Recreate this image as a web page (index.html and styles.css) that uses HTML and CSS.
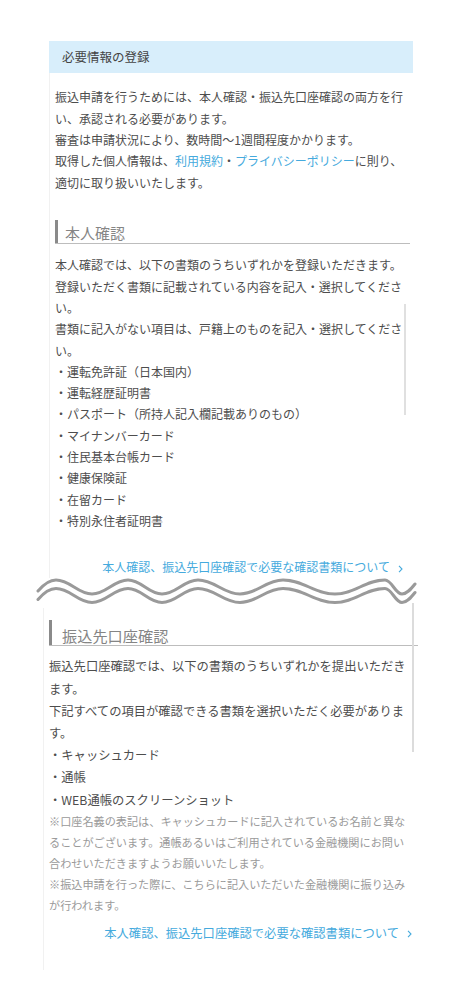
FILE: index.html
```html
<!DOCTYPE html>
<html lang="ja">
<head>
<meta charset="utf-8">
<title>必要情報の登録</title>
<link rel="stylesheet" href="styles.css">
</head>
<body>
<div class="page">
  <section class="shot-top">
    <div class="card">
      <div class="card-head">必要情報の登録</div>
      <div class="card-body">
        <p class="intro">振込申請を行うためには、本人確認・振込先口座確認の両方を行い、承認される必要があります。<br>審査は申請状況により、数時間〜1週間程度かかります。<br>取得した個人情報は、<a class="link" href="#">利用規約</a>・<a class="link" href="#">プライバシーポリシー</a>に則り、適切に取り扱いいたします。</p>
        <h3 class="sec-title"><span>本人確認</span></h3>
        <p class="body">本人確認では、以下の書類のうちいずれかを登録いただきます。<br>登録いただく書類に記載されている内容を記入・選択してください。<br>書類に記入がない項目は、戸籍上のものを記入・選択してください。</p>
        <ul class="list">
          <li>・運転免許証（日本国内）</li>
          <li>・運転経歴証明書</li>
          <li>・パスポート（所持人記入欄記載ありのもの）</li>
          <li>・マイナンバーカード</li>
          <li>・住民基本台帳カード</li>
          <li>・健康保険証</li>
          <li>・在留カード</li>
          <li>・特別永住者証明書</li>
        </ul>
        <p class="more"><a class="link" href="#">本人確認、振込先口座確認で必要な確認書類について</a><svg class="chev" width="5" height="8" viewBox="0 0 5 8"><path d="M1 0.8 L4 4 L1 7.2" fill="none" stroke="#45aadd" stroke-width="1.1"/></svg></p>
      </div>
    </div>
  </section>

  <div class="wave">
    <svg width="466" height="30" viewBox="0 0 466 30">
      <g fill="none" stroke="#9a9a9a" stroke-width="3" stroke-linecap="round">
        <path d="M38,13 C44,6 50,2 56,2 C70.4,2 77.6,16 92,16 C106.4,16 113.6,2 128,2 C141.6,2 148.4,16 162,16 C176.4,16 183.6,2 198,2 C214.8,2 223.2,16 240,16 C257.2,16 265.8,2 283,2 C303.8,2 314.2,16 335,16 C355,16 365,2 385,2 C391.8,2 395.2,16 402,16 C407,16 411,11 415,6"/>
        <path transform="translate(0,8.5)" d="M38,13 C44,6 50,2 56,2 C70.4,2 77.6,16 92,16 C106.4,16 113.6,2 128,2 C141.6,2 148.4,16 162,16 C176.4,16 183.6,2 198,2 C214.8,2 223.2,16 240,16 C257.2,16 265.8,2 283,2 C303.8,2 314.2,16 335,16 C355,16 365,2 385,2 C391.8,2 395.2,16 402,16 C407,16 411,11 415,6"/>
      </g>
    </svg>
  </div>

  <section class="shot-bottom">
    <div class="card2">
      <h3 class="sec-title2"><span>振込先口座確認</span></h3>
      <p class="body2">振込先口座確認では、以下の書類のうちいずれかを提出いただきます。<br>下記すべての項目が確認できる書類を選択いただく必要があります。</p>
      <ul class="list2">
        <li>・キャッシュカード</li>
        <li>・通帳</li>
        <li>・WEB通帳のスクリーンショット</li>
      </ul>
      <p class="note">※口座名義の表記は、キャッシュカードに記入されているお名前と異なることがございます。通帳あるいはご利用されている金融機関にお問い合わせいただきますようお願いいたします。<br>※振込申請を行った際に、こちらに記入いただいた金融機関に振り込みが行われます。</p>
      <p class="more2"><a class="link" href="#">本人確認、振込先口座確認で必要な確認書類について</a><svg class="chev" width="5" height="8" viewBox="0 0 5 8"><path d="M1 0.8 L4 4 L1 7.2" fill="none" stroke="#45aadd" stroke-width="1.1"/></svg></p>
    </div>
  </section>

  <div class="scroll-top"></div>
  <div class="scroll-bottom"></div>
</div>
</body>
</html>
```

FILE: styles.css
```css
html, body {
  margin: 0;
  padding: 0;
  background: #ffffff;
}
body {
  font-family: "Noto Sans CJK JP", "Noto Sans", sans-serif;
  color: #4d4d4d;
}
.page {
  position: relative;
  width: 466px;
  min-height: 999px;
}
.link {
  color: #45aadd;
  text-decoration: none;
}

/* top screenshot */
.shot-top {
  padding-top: 41px;
}
.card {
  margin-left: 49px;
  width: 364px;
}
.card-head {
  height: 32px;
  line-height: 32px;
  background: #d8eefb;
  padding-left: 13px;
  font-size: 12.5px;
  color: #444444;
}
.card-body {
  border-left: 1px solid #f1f1f1;
  padding: 13.35px 3px 0 5px;
}
.intro,
.body,
.list {
  margin: 0;
  font-size: 12px;
  line-height: 21.3px;
}
.list {
  list-style: none;
  padding: 0;
}
.sec-title {
  margin: 27.15px 0 0;
  font-size: 15px;
  font-weight: normal;
  color: #858585;
  border-bottom: 1px solid #bdbdbd;
}
.sec-title span {
  display: block;
  border-left: 3px solid #8a8a8a;
  padding: 3px 0 0 7px;
  line-height: 20px;
}
.body {
  margin-top: 10.35px;
}
.more {
  margin: 25.1px 0 0;
  padding-right: 7px;
  text-align: right;
  font-size: 12px;
  line-height: 21.3px;
}
.chev {
  display: inline-block;
  margin-left: 8px;
  vertical-align: -0.5px;
}

/* separator */
.wave {
  height: 30px;
}
.wave svg {
  display: block;
}

/* bottom screenshot */
.card2 {
  margin-left: 43px;
  width: 369px;
  border-left: 1px solid #f1f1f1;
  padding: 12px 0 26px 5px;
}
.sec-title2 {
  margin: 0;
  font-size: 15.2px;
  font-weight: normal;
  color: #858585;
  border-bottom: 1px solid #bdbdbd;
}
.sec-title2 span {
  display: block;
  border-left: 3px solid #8a8a8a;
  padding: 5px 0 0 10px;
  line-height: 20px;
}
.body2,
.list2 {
  margin: 0;
  width: 364px;
  font-size: 12.3px;
  line-height: 22.2px;
}
.body2 {
  margin-top: 9.9px;
}
.list2 {
  list-style: none;
  padding: 0;
}
.note {
  margin: 0;
  width: 364px;
  font-size: 11.15px;
  line-height: 20.9px;
  color: #9a9a9a;
}
.more2 {
  margin: 6.15px 0 0;
  width: 363px;
  padding-right: 1px;
  text-align: right;
  font-size: 12.3px;
  line-height: 22px;
}

/* scrollbar overlays */
.scroll-top {
  position: absolute;
  left: 404px;
  top: 304px;
  width: 2px;
  height: 111px;
  background: #e0e0e0;
}
.scroll-bottom {
  position: absolute;
  left: 412px;
  top: 603px;
  width: 2px;
  height: 149px;
  background: #dcdcdc;
}
```
